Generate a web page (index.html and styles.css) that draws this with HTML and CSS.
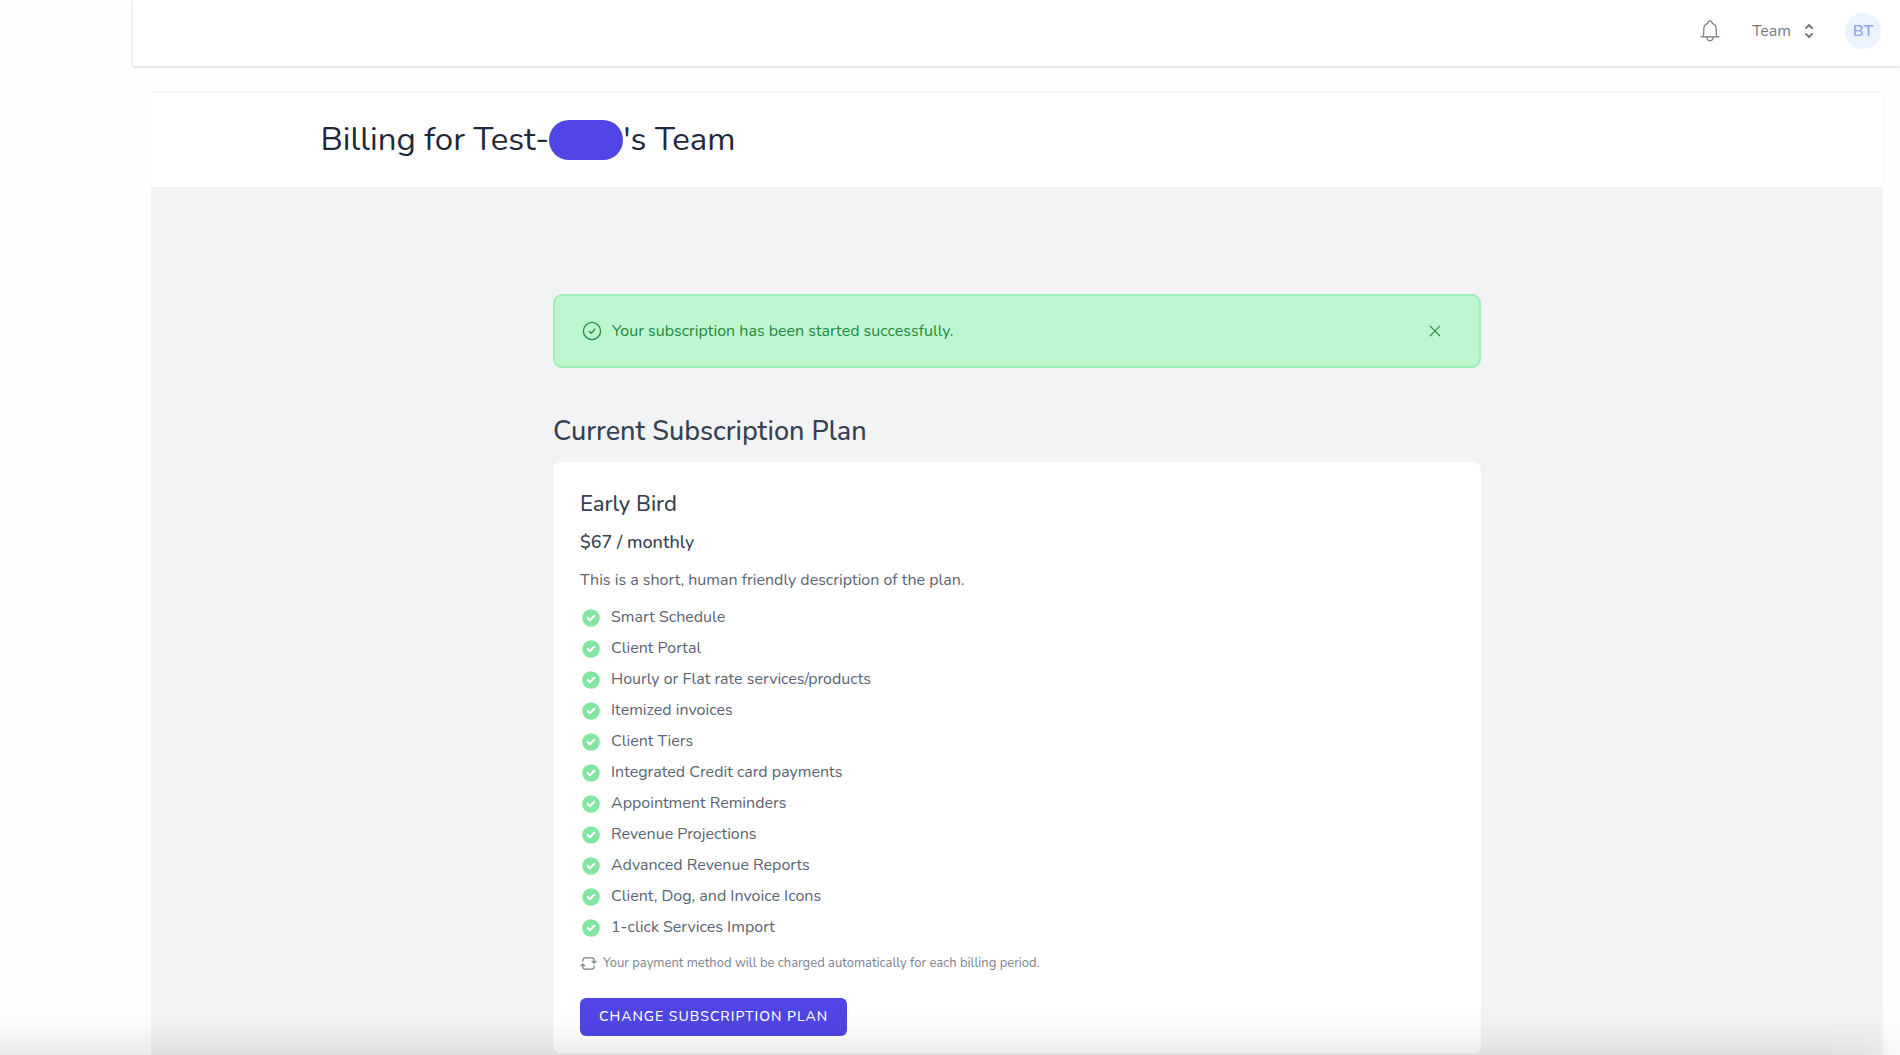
FILE: index.html
```
<!DOCTYPE html>
<html lang="en">
<head>
<meta charset="utf-8">
<meta name="viewport" content="width=device-width, initial-scale=1">
<title>Billing</title>
<link rel="stylesheet" href="styles.css">
</head>
<body>
<svg class="sprite" aria-hidden="true">
  <symbol id="check" viewBox="0 0 20 20"><path fill="currentColor" fill-rule="evenodd" d="M10 18a8 8 0 100-16 8 8 0 000 16zm3.707-9.293a1 1 0 00-1.414-1.414L9 10.586 7.707 9.293a1 1 0 00-1.414 1.414l2 2a1 1 0 001.414 0l4-4z"/></symbol>
</svg>
<div class="app">
  <aside class="sidebar"></aside>
  <div class="content">
    <header class="topbar">
      <button class="icon-button" type="button" aria-label="Notifications">
        <svg class="bell" viewBox="0 0 24 24" fill="none" stroke="currentColor" stroke-width="1.2" stroke-linejoin="round" stroke-linecap="round"><path d="M3 17.800h18M4.800 17.800c.8-1.200 1-2.800 1-5.100V10c0-3 1.600-5 4-5.700C9.900 2.900 10.700 1.800 12 1.800s2.100 1.100 2.200 2.500c2.400.7 4 2.700 4 5.700v2.700c0 2.300.2 3.900 1 5.100M8.700 17.800c.2 2.600 1.500 4 3.300 4s3.100-1.400 3.300-4"/></svg>
      </button>
      <button class="team-button" type="button">Team
        <svg class="selector" viewBox="0 0 20 20" fill="currentColor"><path fill-rule="evenodd" d="M10 3a1 1 0 01.707.293l3 3a1 1 0 01-1.414 1.414L10 5.414 7.707 7.707a1 1 0 01-1.414-1.414l3-3A1 1 0 0110 3zm-3.707 9.293a1 1 0 011.414 0L10 14.586l2.293-2.293a1 1 0 011.414 1.414l-3 3a1 1 0 01-1.414 0l-3-3a1 1 0 010-1.414z"/></svg>
      </button>
      <button class="avatar" type="button">BT</button>
    </header>
    <main class="page">
      <div class="page-header">
        <h1 class="page-title">Billing for Test-<span class="redacted"></span>'s Team</h1>
      </div>
      <div class="page-body">
        <div class="alert" role="status">
          <svg class="alert-icon" viewBox="0 0 20 20" fill="none" stroke="currentColor" stroke-width="1.3" stroke-linecap="round" stroke-linejoin="round"><circle cx="10" cy="10" r="8.600"/><path d="M7.200 10.400l2 1.900 3.700-4.300"/></svg>
          <p class="alert-text">Your subscription has been started successfully.</p>
          <button class="alert-close" type="button" aria-label="Dismiss">
            <svg class="close-icon" viewBox="0 0 12 12" stroke="currentColor" stroke-width="1.200" stroke-linecap="round"><path d="M1.200 1.200l9.600 9.600M10.800 1.200l-9.600 9.600"/></svg>
          </button>
        </div>
        <h2 class="section-title">Current Subscription Plan</h2>
        <section class="card">
          <h3 class="plan-name">Early Bird</h3>
          <p class="plan-price">$67 / monthly</p>
          <p class="plan-text">This is a short, human friendly description of the plan.</p>
          <ul class="features">
            <li><svg class="check"><use href="#check"/></svg>Smart Schedule</li>
            <li><svg class="check"><use href="#check"/></svg>Client Portal</li>
            <li><svg class="check"><use href="#check"/></svg>Hourly or Flat rate services/products</li>
            <li><svg class="check"><use href="#check"/></svg>Itemized invoices</li>
            <li><svg class="check"><use href="#check"/></svg>Client Tiers</li>
            <li><svg class="check"><use href="#check"/></svg>Integrated Credit card payments</li>
            <li><svg class="check"><use href="#check"/></svg>Appointment Reminders</li>
            <li><svg class="check"><use href="#check"/></svg>Revenue Projections</li>
            <li><svg class="check"><use href="#check"/></svg>Advanced Revenue Reports</li>
            <li><svg class="check"><use href="#check"/></svg>Client, Dog, and Invoice Icons</li>
            <li><svg class="check"><use href="#check"/></svg>1-click Services Import</li>
          </ul>
          <p class="note">
            <svg class="refresh" viewBox="0 0 18 16" fill="none" stroke="currentColor" stroke-width="1.300" stroke-linecap="round" stroke-linejoin="round"><path d="M3 5.500V4.500a2.500 2.500 0 012.500-2.500h7A2.500 2.500 0 0115 4.500V7M12.800 5.500L15 7.500l2.200-2M15 10.500v1a2.500 2.500 0 01-2.500 2.500h-7A2.500 2.500 0 013 11.500V9M.8 10.500L3 8.500l2.200 2"/></svg>
            Your payment method will be charged automatically for each billing period.
          </p>
          <button class="primary" type="button">Change Subscription Plan</button>
        </section>
      </div>
    </main>
  </div>
</div>
<div class="bottom-shade"></div>
</body>
</html>
```
FILE: styles.css
```
* { box-sizing: border-box; }
body {
  margin: 0;
  background: #fefefe;
  color: #5a6474;
  font-family: Nunito, Lato, "Open Sans", sans-serif;
  font-size: 16px;
  line-height: 24px;
}
h1, h2, h3, p, ul { margin: 0; padding: 0; }
button { font: inherit; color: inherit; border: 0; padding: 0; background: none; cursor: pointer; }
svg { flex: none; }
.sprite { position: absolute; width: 0; height: 0; }

.app { display: flex; min-height: 100vh; }
.sidebar { flex: 0 0 133px; }
.content { flex: 1; min-width: 0; display: flex; flex-direction: column; }

.topbar {
  display: flex;
  align-items: center;
  justify-content: flex-end;
  height: 66px;
  padding: 0 19px 5px;
  background: #fff;
  box-shadow: 0 1px 3px rgba(0, 0, 0, .2);
  color: #737b89;
}
.icon-button, .team-button { display: flex; align-items: center; }
.bell { width: 24px; height: 24px; }
.team-button { margin: 0 26px 0 30px; gap: 8px; }
.selector { width: 20px; height: 20px; }
.avatar {
  width: 36px;
  height: 36px;
  border-radius: 50%;
  background: #ebf3ff;
  color: #8ba5f3;
  font-weight: 600;
}

.page {
  flex: 1;
  display: flex;
  flex-direction: column;
  margin: 27px 17px 0 18px;
  background: #f2f3f5;
}
.page-header {
  padding: 27px 32px;
  background: #fff;
  box-shadow: 0 -1px 3px rgba(0, 0, 0, .06);
}
.page-title {
  display: flex;
  align-items: center;
  max-width: 1393px;
  margin: 0 auto;
  color: #1f2937;
  font-size: 33px;
  font-weight: 400;
  line-height: 40px;
}
.redacted { width: 74px; height: 40px; border-radius: 20px; background: #4f46e5; }

.page-body {
  width: 100%;
  max-width: 928px;
  margin: 0 auto;
  padding: 107px 0 3px;
}
.alert {
  display: flex;
  align-items: center;
  gap: 10px;
  height: 74px;
  padding: 0 38px 0 27px;
  border: 2px solid #9df0b7;
  border-radius: 9px;
  background: #bdf7d0;
  color: #23893f;
}
.alert-icon { width: 20px; height: 20px; }
.alert-text { flex: 1; }
.alert-close { display: flex; }
.close-icon { width: 12px; height: 12px; }

.section-title {
  margin: 46px 0 12px;
  color: #374151;
  font-size: 27px;
  font-weight: 500;
  line-height: 36px;
}
.card {
  padding: 28px 27px 18px;
  border-radius: 8px;
  background: #fff;
  box-shadow: 0 1px 2px rgba(0, 0, 0, .06);
}
.plan-name { color: #374151; font-size: 22px; font-weight: 500; line-height: 28px; }
.plan-price { margin-top: 12px; color: #374151; font-size: 18px; font-weight: 500; }
.plan-text { margin-top: 14px; }
.features { margin: 10px 0 8px; list-style: none; }
.features li { display: flex; align-items: center; gap: 9px; line-height: 31px; }
.check { width: 22px; height: 22px; color: #83e6a0; }
.note { display: flex; align-items: center; gap: 6px; color: #7b8290; font-size: 13px; }
.refresh { width: 17px; height: 15px; }
.primary {
  margin-top: 23px;
  padding: 0 19px;
  border-radius: 6px;
  background: #4f46e5;
  color: #fff;
  font-size: 14px;
  font-weight: 500;
  line-height: 38px;
  letter-spacing: 1px;
  text-transform: uppercase;
}
.bottom-shade {
  position: fixed;
  left: -60px;
  right: 12px;
  bottom: -40px;
  height: 40px;
  box-shadow: 0 0 50px rgba(0, 0, 0, .17);
  pointer-events: none;
}
```
